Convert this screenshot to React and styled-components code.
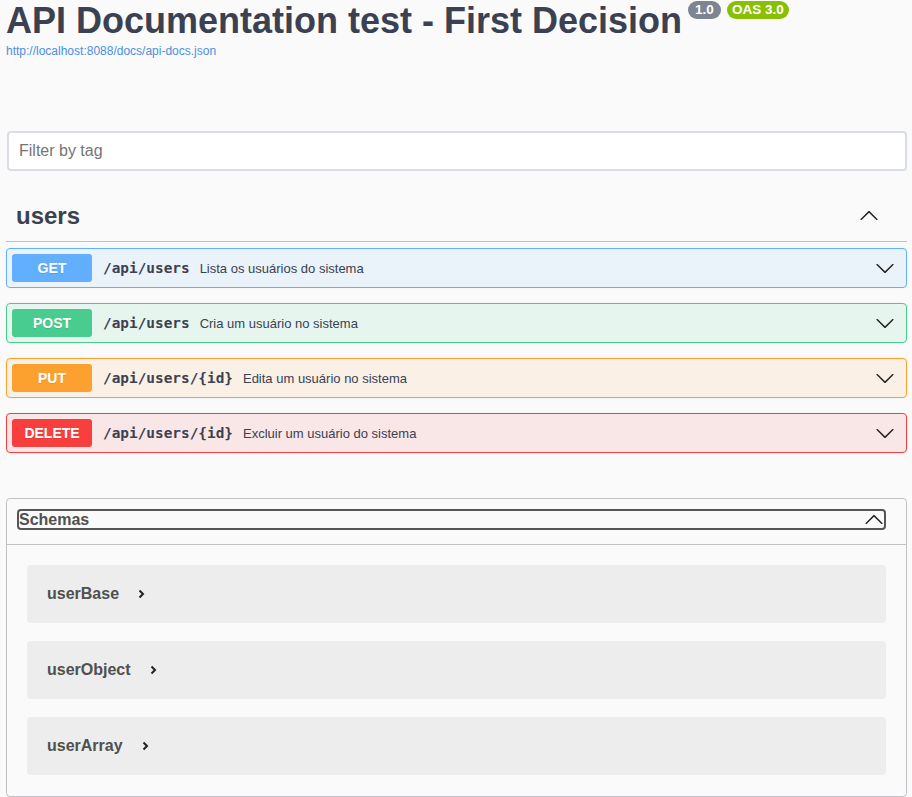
import React from 'react'
import styled, { createGlobalStyle } from 'styled-components'

const Global = createGlobalStyle`
  html, body {
    margin: 0;
    padding: 0;
    background: #fafafa;
  }
  body {
    font-family: "Liberation Sans", Arial, sans-serif;
    color: #3b4151;
  }
`

const methods = {
  GET: { color: '#61affe', bg: 'rgba(97,175,254,.1)' },
  POST: { color: '#49cc90', bg: 'rgba(73,204,144,.1)' },
  PUT: { color: '#fca130', bg: 'rgba(252,161,48,.1)' },
  DELETE: { color: '#f93e3e', bg: 'rgba(249,62,62,.1)' },
}

const ops = [
  { method: 'GET', path: '/api/users', summary: 'Lista os usuários do sistema' },
  { method: 'POST', path: '/api/users', summary: 'Cria um usuário no sistema' },
  { method: 'PUT', path: '/api/users/{id}', summary: 'Edita um usuário no sistema' },
  { method: 'DELETE', path: '/api/users/{id}', summary: 'Excluir um usuário do sistema' },
]

const models = ['userBase', 'userObject', 'userArray']

const Wrapper = styled.div`
  padding: 0 5px 0 6px;
`

const Info = styled.div`
  margin-bottom: 73px;
`

const TitleRow = styled.div`
  display: flex;
  align-items: flex-start;
  gap: 6px;
`

const Title = styled.h2`
  margin: 0;
  font-size: 36px;
  font-weight: 700;
  color: #3b4151;
  line-height: normal;
`

const Badge = styled.span`
  display: inline-block;
  margin-top: 1px;
  height: 18px;
  line-height: 18px;
  padding: 0 ${p => p.$wide ? 5 : 7}px;
  border-radius: 57px;
  background: ${p => p.$bg};
  color: #fff;
  font-size: 13.5px;
  font-weight: 700;
`

const Url = styled.a`
  display: block;
  margin-top: 2px;
  font-size: 12px;
  color: #4990e2;
  text-decoration: none;
`

const Filter = styled.input`
  box-sizing: border-box;
  display: block;
  width: calc(100% - 1px);
  margin-left: 1px;
  height: 40px;
  border: 2px solid #d8dde7;
  border-radius: 4px;
  padding: 0 10px;
  background: #fff;
  font-family: "Liberation Sans", Arial, sans-serif;
  font-size: 16px;
  color: #3b4151;
  outline: none;
  &::placeholder {
    color: #757575;
  }
`

const TagHeader = styled.div`
  display: flex;
  align-items: center;
  justify-content: space-between;
  height: 50px;
  margin-top: 20px;
  padding: 0 28px 0 10px;
  border-bottom: 1px solid rgba(59, 65, 81, .3);
  margin-bottom: 6px;
`

const TagName = styled.h3`
  margin: 0;
  font-size: 24px;
  font-weight: 700;
  color: #3b4151;
`

const OpList = styled.div`
  display: flex;
  flex-direction: column;
  gap: 15px;
`

const Opblock = styled.div`
  box-sizing: border-box;
  display: flex;
  align-items: center;
  height: 40px;
  padding: 0 11px 0 5px;
  border: 1px solid ${p => p.$color};
  border-radius: 4px;
  background: ${p => p.$bg};
  box-shadow: 0 0 3px rgba(0, 0, 0, .05);
`

const Method = styled.span`
  width: 80px;
  height: 28px;
  line-height: 28px;
  border-radius: 3px;
  background: ${p => p.$color};
  color: #fff;
  font-size: 14px;
  font-weight: 700;
  text-align: center;
  text-shadow: 0 1px 0 rgba(0, 0, 0, .1);
  flex-shrink: 0;
`

const Path = styled.span`
  padding: 0 10px 0 11px;
  font-family: "DejaVu Sans Mono", "Liberation Mono", monospace;
  font-size: 14.4px;
  font-weight: 700;
  color: #3b4151;
`

const Summary = styled.span`
  flex: 1;
  font-size: 13px;
  color: #3b4151;
`

const Arrow = styled.svg`
  width: 20px;
  height: 20px;
  flex-shrink: 0;
  transform: rotate(${p => p.$up ? 180 : 0}deg);
`

const Models = styled.section`
  margin-top: 45px;
  border: 1px solid rgba(59, 65, 81, .3);
  border-radius: 4px;
  padding-bottom: 21px;
`

const ModelsHead = styled.div`
  padding: 10px 20px 14px 10px;
  border-bottom: 1px solid rgba(59, 65, 81, .3);
`

const ModelsButton = styled.button`
  box-sizing: border-box;
  display: flex;
  align-items: center;
  justify-content: space-between;
  width: 100%;
  height: 21px;
  padding: 0;
  border: 2px solid #555;
  border-radius: 4px;
  background: transparent;
  font-family: "Liberation Sans", Arial, sans-serif;
  font-size: 16px;
  font-weight: 700;
  color: #505050;
`

const ModelList = styled.div`
  display: flex;
  flex-direction: column;
  gap: 18px;
  padding: 20px 20px 0;
`

const Model = styled.div`
  display: flex;
  align-items: center;
  gap: 18px;
  height: 58px;
  padding-left: 20px;
  border-radius: 4px;
  background: rgba(0, 0, 0, .05);
  font-size: 16px;
  font-weight: 700;
  color: #505050;
`

const Chevron = ({ up }) => (
  <Arrow $up={up} viewBox="0 0 20 20">
    <path
      fill="#222"
      d="M17.418 6.109c.272-.268.709-.268.979 0s.271.701 0 .969l-7.908 7.83c-.27.268-.707.268-.979 0l-7.908-7.83c-.27-.268-.27-.701 0-.969.271-.268.709-.268.979 0L10 13.25l7.418-7.141z"
    />
  </Arrow>
)

const SmallRight = () => (
  <svg width="9" height="10" viewBox="0 0 9 10">
    <polyline points="2.5,1.5 6,5 2.5,8.5" fill="none" stroke="#222" strokeWidth="2" />
  </svg>
)

export default function App() {
  return (
    <Wrapper>
      <Global />
      <Info>
        <TitleRow>
          <Title>API Documentation test - First Decision</Title>
          <Badge $bg="#7d8492">1.0</Badge>
          <Badge $bg="#89bf04" $wide>OAS 3.0</Badge>
        </TitleRow>
        <Url href="#">http://localhost:8088/docs/api-docs.json</Url>
      </Info>

      <Filter placeholder="Filter by tag" />

      <TagHeader>
        <TagName>users</TagName>
        <Chevron up />
      </TagHeader>

      <OpList>
        {ops.map(op => (
          <Opblock key={op.method} $color={methods[op.method].color} $bg={methods[op.method].bg}>
            <Method $color={methods[op.method].color}>{op.method}</Method>
            <Path>{op.path}</Path>
            <Summary>{op.summary}</Summary>
            <Chevron />
          </Opblock>
        ))}
      </OpList>

      <Models>
        <ModelsHead>
          <ModelsButton>
            <span>Schemas</span>
            <Chevron up />
          </ModelsButton>
        </ModelsHead>
        <ModelList>
          {models.map(m => (
            <Model key={m}>
              {m}
              <SmallRight />
            </Model>
          ))}
        </ModelList>
      </Models>
    </Wrapper>
  )
}
